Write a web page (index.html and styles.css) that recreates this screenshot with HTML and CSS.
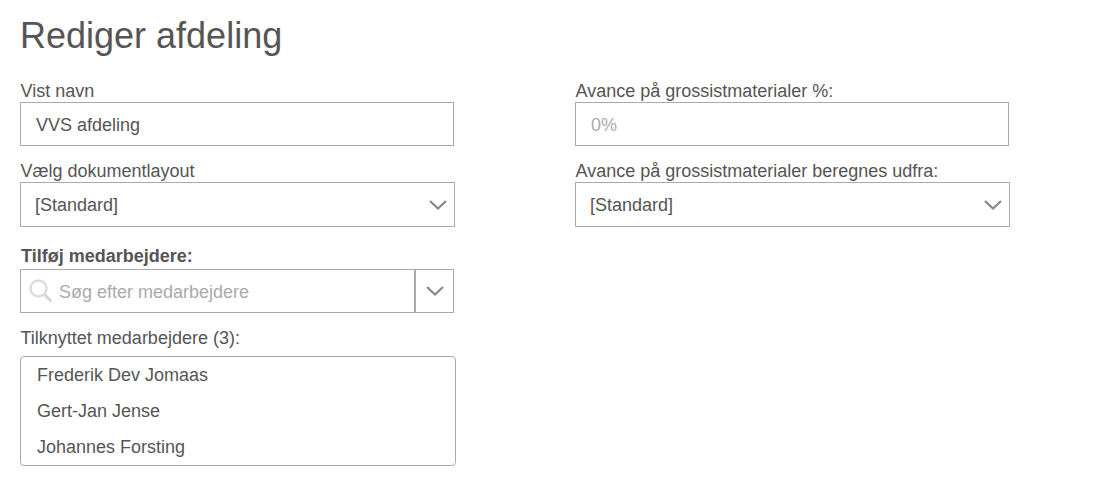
FILE: index.html
```html
<!DOCTYPE html>
<html lang="da">
<head>
<meta charset="utf-8">
<title>Rediger afdeling</title>
<link rel="stylesheet" href="styles.css">
</head>
<body>
<h1 class="title">Rediger afdeling</h1>
<div class="columns">
  <div class="column">
    <label class="label">Vist navn</label>
    <div class="box box-input"><span class="value">VVS afdeling</span></div>
    <label class="label label-next">Vælg dokumentlayout</label>
    <div class="box box-select">
      <span class="value value-select">[Standard]</span>
      <svg class="chevron" width="18" height="10" viewBox="0 0 18 10"><path d="M1 1l8 7.5L17 1" fill="none" stroke="#888" stroke-width="2.2"/></svg>
    </div>
    <label class="label label-bold">Tilføj medarbejdere:</label>
    <div class="box combo">
      <div class="combo-search">
        <svg class="search-icon" width="24" height="24" viewBox="0 0 24 24"><circle cx="9.5" cy="9.5" r="8" fill="none" stroke="#dcdcdc" stroke-width="2.4"/><path d="M15.5 15.5l7 7" fill="none" stroke="#d4d4d4" stroke-width="3"/></svg>
        <span class="placeholder">Søg efter medarbejdere</span>
      </div>
      <div class="combo-toggle">
        <svg width="18" height="10" viewBox="0 0 18 10"><path d="M1 1l8 7.5L17 1" fill="none" stroke="#888" stroke-width="2.2"/></svg>
      </div>
    </div>
    <label class="label label-list">Tilknyttet medarbejdere (3):</label>
    <ul class="list">
      <li class="list-item">Frederik Dev Jomaas</li>
      <li class="list-item">Gert-Jan Jense</li>
      <li class="list-item">Johannes Forsting</li>
    </ul>
  </div>
  <div class="column">
    <label class="label">Avance på grossistmaterialer %:</label>
    <div class="box box-input"><span class="value value-muted">0%</span></div>
    <label class="label label-next">Avance på grossistmaterialer beregnes udfra:</label>
    <div class="box box-select">
      <span class="value value-select">[Standard]</span>
      <svg class="chevron" width="18" height="10" viewBox="0 0 18 10"><path d="M1 1l8 7.5L17 1" fill="none" stroke="#888" stroke-width="2.2"/></svg>
    </div>
  </div>
</div>
</body>
</html>
```
FILE: styles.css
```css
* { box-sizing: border-box; }
html, body { margin: 0; padding: 0; background: #fff; }
body {
  padding: 0 20px;
  font-family: "Liberation Sans", Arial, sans-serif;
  font-size: 18px;
  color: #555;
  height: 481px;
  overflow: hidden;
}
.title {
  margin: 0;
  padding-top: 15px;
  height: 80px;
  font-size: 36px;
  line-height: 42px;
  font-weight: 400;
  color: #555;
}
.columns {
  display: grid;
  grid-template-columns: 555px 435px;
}
.column { display: flex; flex-direction: column; align-items: flex-start; }
.label { display: block; height: 22px; line-height: 22px; font-size: 18px; padding-left: 0.5px; }
.label-next { margin-top: 14px; }
.label-bold { margin-top: 20px; line-height: 18px; font-weight: 700; padding-left: 1px; }
.label-list { margin-top: 15px; height: 28px; line-height: 20px; }
.box { border: 1px solid #aaa; background: #fff; display: flex; align-items: center; }
.box-input { width: 434px; height: 44px; padding: 2px 0 0 15px; }
.box-select { width: 435px; height: 45px; padding: 0 7px 0 14px; justify-content: space-between; }
.value { line-height: 20px; }
.value-muted { color: #aaa; }
.combo { width: 434px; height: 44px; }
.combo-search { flex: 1; height: 100%; display: flex; align-items: center; padding: 0 0 0 8px; border-right: 2px solid #aaa; }
.search-icon { margin-right: 6px; flex: none; }
.placeholder { color: #aaa; padding-top: 2px; }
.combo-toggle { width: 37px; height: 100%; display: flex; align-items: center; justify-content: center; }
.list {
  list-style: none;
  margin: 0;
  padding: 0;
  width: 436px;
  height: 110px;
  border: 1px solid #aaa;
  border-radius: 4px;
}
.list-item { height: 36px; line-height: 36px; padding-left: 16px; }
```
